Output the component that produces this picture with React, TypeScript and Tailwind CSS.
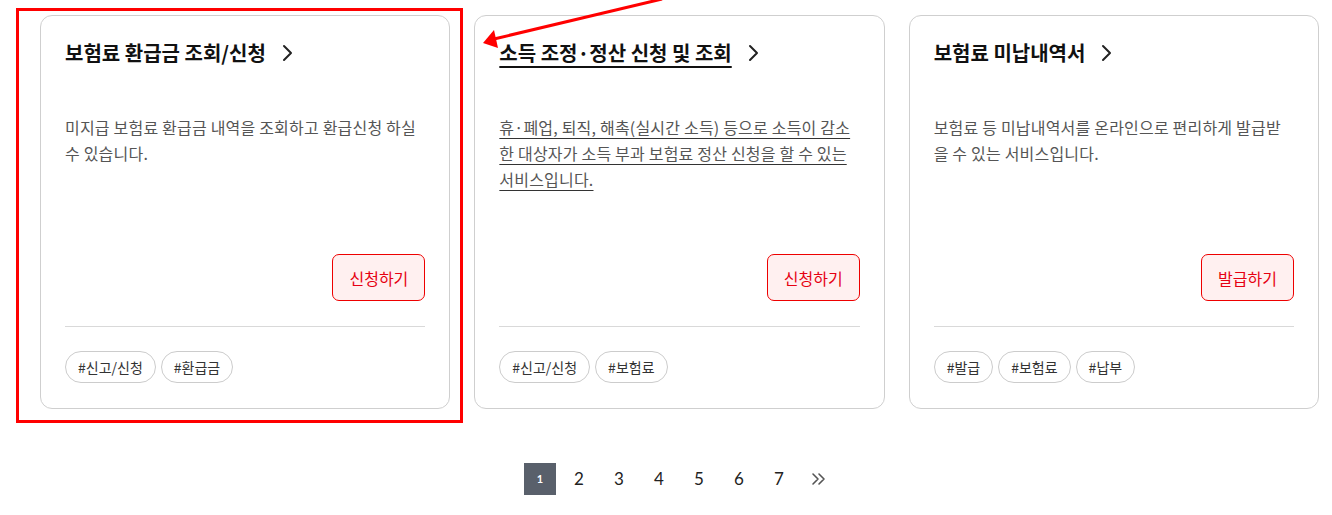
import { FC } from "react";

type Card = {
  title: string;
  desc: string;
  action: string;
  tags: string[];
  hover?: boolean;
};

const cards: Card[] = [
  {
    title: "보험료 환급금 조회/신청",
    desc: "미지급 보험료 환급금 내역을 조회하고 환급신청 하실 수 있습니다.",
    action: "신청하기",
    tags: ["#신고/신청", "#환급금"],
  },
  {
    title: "소득 조정·정산 신청 및 조회",
    desc: "휴·폐업, 퇴직, 해촉(실시간 소득) 등으로 소득이 감소한 대상자가 소득 부과 보험료 정산 신청을 할 수 있는 서비스입니다.",
    action: "신청하기",
    tags: ["#신고/신청", "#보험료"],
    hover: true,
  },
  {
    title: "보험료 미납내역서",
    desc: "보험료 등 미납내역서를 온라인으로 편리하게 발급받을 수 있는 서비스입니다.",
    action: "발급하기",
    tags: ["#발급", "#보험료", "#납부"],
  },
];

const Chevron = () => (
  <svg width="12" height="18" viewBox="0 0 12 18" fill="none" className="ml-[16px] shrink-0">
    <path d="M2 2l7 7-7 7" stroke="#222" strokeWidth="2" strokeLinecap="round" strokeLinejoin="round" />
  </svg>
);

const ServiceCard: FC<{ card: Card; highlight?: boolean }> = ({ card, highlight }) => (
  <div className="relative">
    {/* annotation box */}
    {highlight && (
      <div className="pointer-events-none absolute -left-[24px] -right-[13px] -top-[7px] -bottom-[14px] border-[3px] border-[#ff0000]" />
    )}
    <div className="flex flex-col rounded-[12px] border border-[#cfcfcf] bg-white px-[24px] pt-[22px] pb-[25px]">
      <div className="flex items-center">
        <span
          className={`text-[20px] font-bold leading-[30px] text-[#111] ${
            card.hover ? "underline decoration-2 underline-offset-[5px]" : ""
          }`}
        >
          {card.title}
        </span>
        <Chevron />
      </div>
      <p
        className={`mt-[46px] h-[140px] pr-[2px] text-[16px] leading-[26px] tracking-[0.2px] text-[#555] ${
          card.hover ? "underline underline-offset-[4px] decoration-[#333]" : ""
        }`}
      >
        {card.desc}
      </p>
      <div className="flex justify-end">
        <button className="h-[47px] rounded-[7px] border border-[#ee0000] bg-[#fff0f0] px-[16px] text-[16px] text-[#e60012]">
          {card.action}
        </button>
      </div>
      <div className="mt-[25px] h-px bg-[#d9d9d9]" />
      <div className="mt-[24px] flex gap-[5px]">
        {card.tags.map((t) => (
          <span
            key={t}
            className="flex h-[32px] items-center rounded-full border border-[#cccccc] px-[12px] text-[14px] text-[#333]"
          >
            {t}
          </span>
        ))}
      </div>
    </div>
  </div>
);

const App: FC = () => {
  return (
    <div
      className="relative h-[515px] w-[1332px] overflow-hidden bg-white"
      style={{ fontFamily: '"Noto Sans CJK KR", "Noto Sans", sans-serif' }}
    >
      <div className="grid grid-cols-3 gap-[24px] pl-[40px] pr-[13px] pt-[15px]">
        {cards.map((c, i) => (
          <ServiceCard key={c.title} card={c} highlight={i === 0} />
        ))}
      </div>

      {/* Pagination */}
      <div className="mt-[54px] flex items-center pl-[524px]" style={{ fontFamily: "Lato, sans-serif" }}>
        <span className="mr-[3px] flex h-[32px] w-[32px] items-center justify-center bg-[#59606b] text-[11px] font-bold text-white">
          1
        </span>
        {[2, 3, 4, 5, 6, 7].map((n) => (
          <span key={n} className="flex h-[32px] w-[40px] items-center justify-center text-[17px] text-[#222]">
            {n}
          </span>
        ))}
        <span className="flex h-[32px] w-[40px] items-center justify-center">
          <svg width="16" height="14" viewBox="0 0 16 14" fill="none">
            <path d="M2 2l5 5-5 5M8 2l5 5-5 5" stroke="#555" strokeWidth="1.6" strokeLinecap="round" strokeLinejoin="round" />
          </svg>
        </span>
      </div>

      {/* annotation arrow */}
      <svg className="pointer-events-none absolute left-0 top-0" width="1332" height="515">
        <line x1="662" y1="-1" x2="494" y2="39" stroke="#ff0000" strokeWidth="3" />
        <polygon points="483,43 494,30 498,48" fill="#ff0000" />
      </svg>
    </div>
  );
};

export default App;
